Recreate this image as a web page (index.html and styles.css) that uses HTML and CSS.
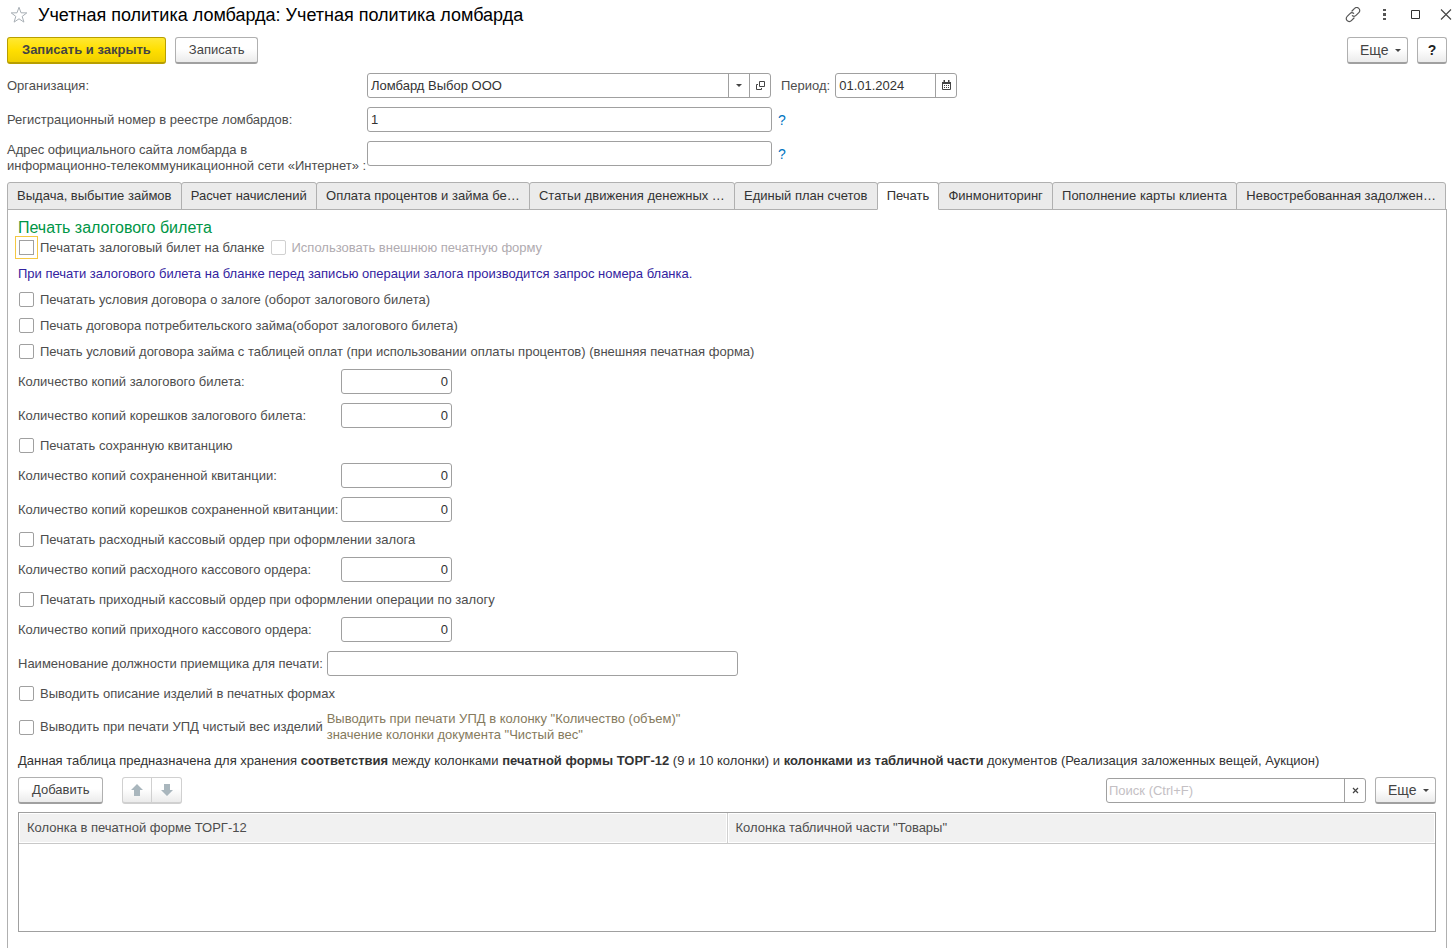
FILE: index.html
```html
<!DOCTYPE html>
<html lang="ru">
<head>
<meta charset="utf-8">
<title>Учетная политика ломбарда</title>
<link rel="stylesheet" href="styles.css">
</head>
<body>
<header class="titlebar">
  <button class="icon-btn" aria-label="В избранное"><svg width="18" height="18" viewBox="0 0 18 18"><path d="M9 1.3l2 5.500 5.800.1-4.600 3.500 1.700 5.700L9 12.800l-4.900 3.300 1.700-5.700L1.200 6.900 7 6.800z" fill="none" stroke="#a8afb5"/></svg></button>
  <h1 class="title">Учетная политика ломбарда: Учетная политика ломбарда</h1>
  <div class="window-tools">
    <button class="icon-btn" aria-label="Получить ссылку"><svg width="16" height="16" viewBox="0 0 16 16" fill="none" stroke="#555" stroke-width="1.200" stroke-linecap="round"><path d="M7 4l2.600-2.600a2.800 2.800 0 0 1 4.200 0 2.800 2.800 0 0 1 0 4.200L11 8.400a2.800 2.800 0 0 1-3.600.3M9 11l-2.600 2.600a2.800 2.800 0 0 1-4.200 0 2.800 2.800 0 0 1 0-4.200L5 6.600a2.800 2.800 0 0 1 3.600-.3"/></svg></button>
    <button class="icon-btn" aria-label="Меню"><svg width="16" height="16" viewBox="0 0 16 16" fill="#555"><path d="M7 2h3v2H7zM7 6h3v3H7zM7 11h3v2H7z"/></svg></button>
    <button class="icon-btn" aria-label="Развернуть"><svg width="16" height="16" viewBox="0 0 16 16" fill="none" stroke="#333"><path d="M4.500 3.500h8v8h-8z"/></svg></button>
    <button class="icon-btn" aria-label="Закрыть"><svg width="16" height="16" viewBox="0 0 16 16" fill="none" stroke="#444" stroke-width="1.100"><path d="M3 2.500l10 10M13 2.500l-10 10"/></svg></button>
  </div>
</header>

<div class="toolbar">
  <button class="btn btn-main">Записать и закрыть</button>
  <button class="btn">Записать</button>
  <span class="spacer"></span>
  <button class="btn btn-more">Еще <span class="caret"></span></button>
  <button class="btn btn-help">?</button>
</div>

<div class="head-form">
  <label for="org">Организация:</label>
  <div class="line">
    <div class="field org"><input id="org" type="text" value="Ломбард Выбор ООО"><button aria-label="Выбрать"><span class="caret"></span></button><button aria-label="Открыть"><svg width="11" height="11" viewBox="0 0 11 11" fill="none" stroke="#444"><path d="M4.500 1.500h5v5h-5zM3 4.500H1.500v5h5V8"/></svg></button></div>
    <label class="period-label" for="period">Период:</label>
    <div class="field date"><input id="period" type="text" value="01.01.2024"><button aria-label="Календарь"><svg width="11" height="11" viewBox="0 0 11 11"><path d="M1.500 2.500h8v7h-8z" fill="none" stroke="#444"/><path d="M1 2h9v2H1zM2.500 0h1.500v2H2.500zM7 0h1.500v2H7zM3 5h1v1H3zM5 5h1v1H5zM7 5h1v1H7zM3 7h1v1H3zM5 7h1v1H5zM7 7h1v1H7z" fill="#444"/></svg></button></div>
  </div>
  <label for="reg">Регистрационный номер в реестре ломбардов:</label>
  <div class="line"><div class="field long"><input id="reg" type="text" value="1"></div><a class="hint" href="#">?</a></div>
  <label class="two-lines" for="site">Адрес официального сайта ломбарда в<br>информационно-телекоммуникационной сети «Интернет» :</label>
  <div class="line"><div class="field long"><input id="site" type="text"></div><a class="hint" href="#">?</a></div>
</div>

<nav class="tabs" role="tablist">
  <button role="tab" class="tab">Выдача, выбытие займов</button>
  <button role="tab" class="tab">Расчет начислений</button>
  <button role="tab" class="tab">Оплата процентов и займа бе…</button>
  <button role="tab" class="tab">Статьи движения денежных …</button>
  <button role="tab" class="tab">Единый план счетов</button>
  <button role="tab" class="tab active" aria-selected="true">Печать</button>
  <button role="tab" class="tab">Финмониторинг</button>
  <button role="tab" class="tab">Пополнение карты клиента</button>
  <button role="tab" class="tab">Невостребованная задолжен…</button>
</nav>

<main class="panel">
  <h2 class="section">Печать залогового билета</h2>
  <div class="line checks">
    <label class="check focused"><input type="checkbox">Печатать залоговый билет на бланке</label>
    <label class="check disabled"><input type="checkbox" disabled>Использовать внешнюю печатную форму</label>
  </div>
  <p class="note">При печати залогового билета на бланке перед записью операции залога производится запрос номера бланка.</p>
  <label class="check"><input type="checkbox">Печатать условия договора о залоге (оборот залогового билета)</label>
  <label class="check"><input type="checkbox">Печать договора потребительского займа(оборот залогового билета)</label>
  <label class="check"><input type="checkbox">Печать условий договора займа с таблицей оплат (при использовании оплаты процентов) (внешняя печатная форма)</label>
  <div class="copies"><label for="c1">Количество копий залогового билета:</label><input id="c1" type="text" value="0"></div>
  <div class="copies"><label for="c2">Количество копий корешков залогового билета:</label><input id="c2" type="text" value="0"></div>
  <label class="check"><input type="checkbox">Печатать сохранную квитанцию</label>
  <div class="copies"><label for="c3">Количество копий сохраненной квитанции:</label><input id="c3" type="text" value="0"></div>
  <div class="copies"><label for="c4">Количество копий корешков сохраненной квитанции:</label><input id="c4" type="text" value="0"></div>
  <label class="check"><input type="checkbox">Печатать расходный кассовый ордер при оформлении залога</label>
  <div class="copies"><label for="c5">Количество копий расходного кассового ордера:</label><input id="c5" type="text" value="0"></div>
  <label class="check"><input type="checkbox">Печатать приходный кассовый ордер при оформлении операции по залогу</label>
  <div class="copies"><label for="c6">Количество копий приходного кассового ордера:</label><input id="c6" type="text" value="0"></div>
  <div class="post"><label for="post">Наименование должности приемщика для печати:</label><div class="field wide"><input id="post" type="text"></div></div>
  <label class="check"><input type="checkbox">Выводить описание изделий в печатных формах</label>
  <div class="line weight">
    <label class="check"><input type="checkbox">Выводить при печати УПД чистый вес изделий</label>
    <p class="tip">Выводить при печати УПД в колонку "Количество (объем)"<br>значение колонки документа "Чистый вес"</p>
  </div>
  <p class="about">Данная таблица предназначена для хранения <b>соответствия</b> между колонками <b>печатной формы ТОРГ-12</b> (9 и 10 колонки) и <b>колонками из табличной части</b> документов (Реализация заложенных вещей, Аукцион)</p>
  <div class="table-tools">
    <button class="btn">Добавить</button>
    <div class="movers">
      <button disabled aria-label="Вверх"><svg width="12" height="12" viewBox="0 0 12 12"><path d="M6 0l6 6H9v6H3V6H0z" fill="#a9b6bd"/></svg></button>
      <button disabled aria-label="Вниз"><svg width="12" height="12" viewBox="0 0 12 12"><path d="M6 12L0 6h3V0h6v6h3z" fill="#a9b6bd"/></svg></button>
    </div>
    <span class="spacer"></span>
    <div class="field search"><input type="text" placeholder="Поиск (Ctrl+F)" aria-label="Поиск"><button aria-label="Очистить"><svg width="7" height="7" viewBox="0 0 7 7" stroke="#444" stroke-width="1.200"><path d="M1 1l5 5M6 1L1 6"/></svg></button></div>
    <button class="btn btn-more">Еще <span class="caret"></span></button>
  </div>
  <div class="grid-box">
    <table class="grid">
      <thead><tr><th>Колонка в печатной форме ТОРГ-12</th><th>Колонка табличной части "Товары"</th></tr></thead>
      <tbody></tbody>
    </table>
  </div>
</main>
</body>
</html>
```
FILE: styles.css
```css
* { box-sizing: border-box; }
html { height: 100%; overflow: hidden; }
body {
  margin: 0;
  min-height: 100%;
  display: flex;
  flex-direction: column;
  background: #fff;
  color: #4d4d4d;
  font: 13px/16px "Liberation Sans", Arial, sans-serif;
}
button, input { font: inherit; color: inherit; margin: 0; }
button { padding: 0; }
p, h1, h2 { margin: 0; }
svg { display: block; }
.spacer { flex: 1; }

.titlebar { display: flex; align-items: center; height: 30px; padding: 0 0 0 10px; }
.icon-btn { border: 0; background: none; }
.title { margin-left: 10px; font-size: 18px; font-weight: 400; line-height: 22px; color: #000; }
.window-tools { display: flex; gap: 15px; margin-left: auto; }

.toolbar { display: flex; gap: 9px; padding: 7px 7px 9px; }
.btn {
  height: 27px;
  padding: 0 13px;
  border: 1px solid #b0b0b0;
  border-bottom: 2px solid #a0a0a0;
  border-radius: 3px;
  background: linear-gradient(#fff 45%, #ebebeb);
  color: #444;
  white-space: nowrap;
}
.btn-main {
  padding: 0 14px;
  border-color: #b89f00;
  background: linear-gradient(#ffe833, #ffdf00 50%, #efcf00);
  font-weight: 700;
}
.btn-more { display: flex; align-items: center; gap: 6px; width: 61px; padding: 0 0 0 12px; font-size: 14px; }
.btn-help { width: 30px; padding: 0; color: #222; font-size: 14px; font-weight: 700; }
.caret { border: 3px solid transparent; border-top-color: #444; border-bottom: 0; }

.head-form {
  display: grid;
  grid-template-columns: 360px 1fr;
  row-gap: 9px;
  align-items: center;
  padding: 0 7px;
}
.head-form > label { white-space: nowrap; }
.head-form > .two-lines { margin-bottom: -8px; }
.line { display: flex; align-items: center; }
.field {
  display: flex;
  height: 25px;
  border: 1px solid #a0a0a0;
  border-radius: 3px;
  background: #fff;
}
.field input { flex: 1; min-width: 0; padding: 0 3px; border: 0; background: none; color: #333; outline: 0; }
.field button {
  display: flex;
  align-items: center;
  justify-content: center;
  width: 21px;
  border: 0;
  border-left: 1px solid #a0a0a0;
  background: none;
}
.org { width: 404px; }
.long { width: 405px; }
.wide { width: 411px; }
.date { width: 122px; }
.period-label { margin: 0 5px 0 10px; }
.hint { margin-left: 6px; color: #0074bf; font-size: 14px; text-decoration: none; }

.tabs { display: flex; margin: 16px 8px 0 7px; }
.tab {
  flex: 1 1 auto;
  height: 28px;
  margin-right: -1px;
  border: 1px solid #b0b0b0;
  border-radius: 3px 3px 0 0;
  padding: 0 8px;
  background: #ebebeb;
  color: #333;
  white-space: nowrap;
}
.tab:last-child { margin-right: 0; }
.tab.active { border-bottom-color: #fff; background: #fff; z-index: 1; }

.panel {
  flex: 1;
  display: flex;
  flex-direction: column;
  align-items: flex-start;
  gap: 9px;
  margin: -1px 7px 0;
  padding: 7px 10px 16px;
  border: solid #b0b0b0;
  border-width: 1px 1px 0;
}
.section { margin-bottom: -8px; color: #009646; font-size: 16px; font-weight: 400; line-height: 21px; }
.checks { gap: 5px; }
.check { display: flex; align-items: center; gap: 6px; height: 17px; white-space: nowrap; }
.check input {
  appearance: none;
  width: 15px;
  height: 15px;
  margin-left: 1px;
  border: 1px solid #a0a0a0;
  border-radius: 2px;
  background: #fff;
}
.focused input { border-radius: 0; outline: 1px solid #f5c842; outline-offset: 3px; }
.disabled { color: #b0abb0; }
.disabled input { border-color: #d0d0d0; }
.note { margin-bottom: -1px; color: #3323a0; line-height: 18px; }
.copies { display: grid; grid-template-columns: 323px 111px; align-items: center; }
.copies input {
  width: 100%;
  height: 25px;
  padding: 0 3px;
  border: 1px solid #a0a0a0;
  border-radius: 3px;
  color: #333;
  text-align: right;
}
.post { display: flex; align-items: center; gap: 4px; }
.weight { gap: 4px; }
.tip { color: #857a5d; }
.about { color: #333; line-height: 18px; }
.table-tools { display: flex; align-items: center; align-self: stretch; margin-top: -2px; }
.movers { display: flex; margin-left: 19px; }
.movers button {
  display: flex;
  align-items: center;
  justify-content: center;
  width: 30px;
  height: 27px;
  border: 1px solid #d0d0d0;
  border-bottom-width: 2px;
  border-radius: 3px 0 0 3px;
  background: linear-gradient(#fff 45%, #ebebeb);
}
.movers button + button { border-left: 0; border-radius: 0 3px 3px 0; }
.search { width: 260px; margin-right: 9px; }
.search input { padding: 0 2px; }
.search input::placeholder { color: #c4c0c4; opacity: 1; }
.grid-box { align-self: stretch; height: 120px; margin-top: -1px; border: 1px solid #a0a0a0; }
.grid { width: 100%; border-collapse: collapse; table-layout: fixed; }
.grid th {
  height: 30px;
  padding: 0 8px;
  border-bottom: 1px solid #c8c8c8;
  background: #f1f1f1;
  box-shadow: inset 0 0 0 1px #fff;
  font-weight: 400;
  text-align: left;
}
.grid th + th { border-left: 1px solid #d0d0d0; }
```
